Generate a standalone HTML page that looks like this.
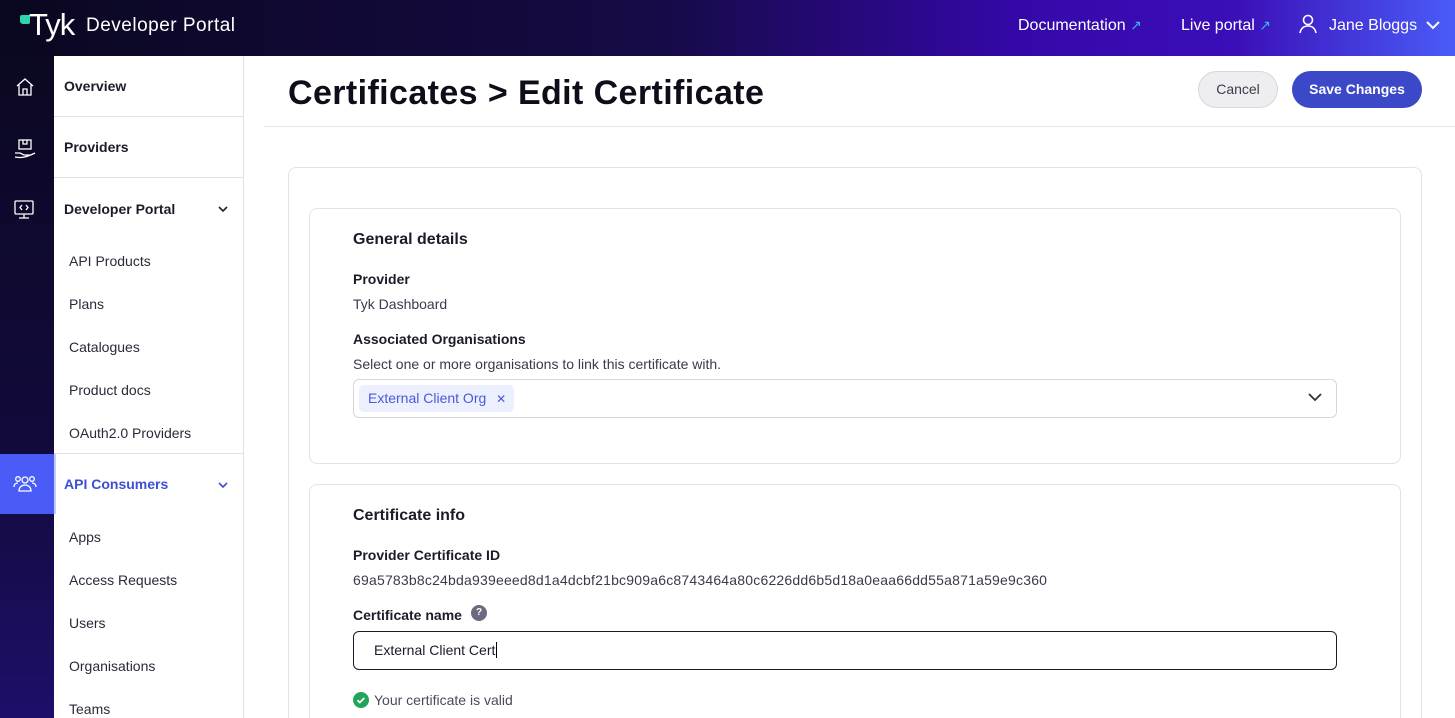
<!DOCTYPE html>
<html style="width:1455px;height:718px;overflow:hidden"><head><meta charset="utf-8"><style>
*{box-sizing:border-box;margin:0;padding:0}
body{width:1455px;height:718px;overflow:hidden;font-family:"Liberation Sans",sans-serif;background:#fff;position:relative;color:#1a1a2e}
.top{position:absolute;left:0;top:0;width:1455px;height:56px;background:linear-gradient(90deg,#0a0720 0%,#160a45 45%,#3408a8 70%,#3b0fb8 85%,#4a5cf8 100%);color:#fff}
.rail{position:absolute;left:0;top:56px;width:54px;height:662px;background:linear-gradient(180deg,#0b0822 0%,#120a3c 60%,#1d0f6a 100%)}
.side{position:absolute;left:54px;top:56px;width:190px;height:662px;background:#fff;border-right:1px solid #e0e0e6}
.side .h{height:61px;border-bottom:1px solid #e0e0e6;font-weight:bold;font-size:14px;padding-left:10px;display:flex;align-items:center;color:#1c1c28}
.side .s{position:absolute;left:15px;font-size:14px;color:#2a2a3a}
.card{position:absolute;border:1px solid #e2e2e8;border-radius:8px;background:#fff}
.open{border-bottom:none;border-radius:8px 8px 0 0}
.lbl{position:absolute;left:353px;font-weight:bold;font-size:14px;color:#1c1c28}
.txt{position:absolute;left:353px;font-size:14px;color:#3a3a4a}
</style></head><body>
<div class="top">
 <div style="position:absolute;left:20px;top:15px;width:10px;height:9px;background:#2dd4b0;border-radius:2px 0 2px 3px"></div>
 <div style="position:absolute;left:29px;top:7px;font-size:31px;letter-spacing:-1px">Tyk</div>
 <div style="position:absolute;left:86px;top:15px;font-size:19px;letter-spacing:0.5px">Developer Portal</div>
 <div style="position:absolute;left:1018px;top:17px;font-size:16px">Documentation <span style="color:#38b6f0;font-size:14px">↗</span></div>
 <div style="position:absolute;left:1181px;top:17px;font-size:16px">Live portal <span style="color:#38b6f0;font-size:14px">↗</span></div>
 <svg style="position:absolute;left:1298px;top:14px" width="20" height="20" viewBox="0 0 20 20" fill="none" stroke="#fff" stroke-width="1.6"><circle cx="10" cy="6" r="4.5"/><path d="M2 19c1-5 4-7 8-7s7 2 8 7"/></svg>
 <div style="position:absolute;left:1329px;top:17px;font-size:16px">Jane Bloggs</div>
 <svg style="position:absolute;left:1425px;top:20px" width="16" height="10" viewBox="0 0 16 10" fill="none" stroke="#fff" stroke-width="2"><path d="M2 2l6 6 6-6"/></svg>
</div>
<div class="rail">
 <svg style="position:absolute;left:15px;top:21px" width="20" height="20" viewBox="0 0 20 20" fill="none" stroke="#fff" stroke-width="1.3"><path d="M2 9L10 2l8 7M4 8v10h12V8M8 18v-6h4v6"/></svg>
 <svg style="position:absolute;left:14px;top:82px" width="22" height="22" viewBox="0 0 22 22" fill="none" stroke="#fff" stroke-width="1.3"><rect x="5" y="2" width="12" height="9"/><path d="M9 2v4h4V2M1 15h5l4 2h6M1 19c5 1 10 1 20-4"/></svg>
 <svg style="position:absolute;left:13px;top:143px" width="22" height="22" viewBox="0 0 22 22" fill="none" stroke="#fff" stroke-width="1.3"><rect x="2" y="2" width="18" height="13" rx="1"/><path d="M9 6l-2 2.5 2 2.5M13 6l2 2.5-2 2.5M11 15v4M6 19h10"/></svg>
 <div style="position:absolute;left:0;top:398px;width:54px;height:60px;background:#4a5cf5"></div>
 <svg style="position:absolute;left:13px;top:418px" width="24" height="20" viewBox="0 0 24 20" fill="none" stroke="#fff" stroke-width="1.3"><circle cx="12" cy="6" r="3"/><circle cx="5" cy="5" r="2.3"/><circle cx="19" cy="5" r="2.3"/><path d="M6 17c0-4 3-6 6-6s6 2 6 6zM1 13c0-3 2-4 4-4M23 13c0-3-2-4-4-4"/></svg>
</div>
<div class="side">
 <div class="h">Overview</div>
 <div class="h">Providers</div>
 <div class="h" style="border:none;position:relative">Developer Portal<svg style="position:absolute;left:164px;top:28px" width="10" height="6" viewBox="0 0 10 6" fill="none" stroke="#222" stroke-width="1.6"><path d="M1 1l4 4 4-4"/></svg></div>
 <div class="s" style="top:197px">API Products</div>
 <div class="s" style="top:240px">Plans</div>
 <div class="s" style="top:283px">Catalogues</div>
 <div class="s" style="top:326px">Product docs</div>
 <div class="s" style="top:369px">OAuth2.0 Providers</div>
 <div style="position:absolute;left:0;top:397px;width:189px;border-top:1px solid #e0e0e6"></div>
 <div style="position:absolute;left:0;top:398px;width:2px;height:60px;background:#c5cbfa"></div>
 <div style="position:absolute;left:10px;top:420px;font-size:14px;font-weight:bold;color:#3d4fd6">API Consumers</div>
 <svg style="position:absolute;left:164px;top:426px" width="10" height="6" viewBox="0 0 10 6" fill="none" stroke="#3d4fd6" stroke-width="1.6"><path d="M1 1l4 4 4-4"/></svg>
 <div class="s" style="top:473px">Apps</div>
 <div class="s" style="top:516px">Access Requests</div>
 <div class="s" style="top:559px">Users</div>
 <div class="s" style="top:602px">Organisations</div>
 <div class="s" style="top:645px">Teams</div>
</div>
<div style="position:absolute;left:288px;top:74px;font-size:34px;font-weight:bold;color:#0e0e1a;letter-spacing:0.4px">Certificates &gt; Edit Certificate</div>
<div style="position:absolute;left:1198px;top:71px;width:80px;height:37px;border:1px solid #d6d6dc;border-radius:19px;background:#eeeef1;font-size:14px;color:#3a3a4a;text-align:center;line-height:35px">Cancel</div>
<div style="position:absolute;left:1292px;top:71px;width:130px;height:37px;border-radius:19px;background:#3b48c8;font-size:14px;font-weight:bold;color:#fff;text-align:center;line-height:37px">Save Changes</div>
<div style="position:absolute;left:264px;top:126px;right:0;border-top:1px solid #e4e4ea"></div>
<div class="card open" style="left:288px;top:167px;width:1134px;height:551px"></div>
<div class="card" style="left:309px;top:208px;width:1092px;height:256px"></div>
<div class="card open" style="left:309px;top:484px;width:1092px;height:234px"></div>
<div class="lbl" style="top:231px;font-size:16px">General details</div>
<div class="lbl" style="top:271px">Provider</div>
<div class="txt" style="top:296px">Tyk Dashboard</div>
<div class="lbl" style="top:331px">Associated Organisations</div>
<div class="txt" style="top:356px">Select one or more organisations to link this certificate with.</div>
<div style="position:absolute;left:353px;top:379px;width:984px;height:39px;border:1px solid #d6d6dc;border-radius:6px"></div>
<div style="position:absolute;left:359px;top:385px;width:155px;height:27px;background:#eceffd;border-radius:5px;color:#4a5ad8;font-size:14px;line-height:27px;padding-left:9px">External Client Org <span style="margin-left:6px;font-size:12px">✕</span></div>
<svg style="position:absolute;left:1308px;top:393px" width="14" height="9" viewBox="0 0 14 9" fill="none" stroke="#333" stroke-width="1.8"><path d="M1 1l6 6 6-6"/></svg>
<div class="lbl" style="top:507px;font-size:16px">Certificate info</div>
<div class="lbl" style="top:547px">Provider Certificate ID</div>
<div class="txt" style="top:572px;letter-spacing:0.2px">69a5783b8c24bda939eeed8d1a4dcbf21bc909a6c8743464a80c6226dd6b5d18a0eaa66dd55a871a59e9c360</div>
<div class="lbl" style="top:607px">Certificate name</div>
<div style="position:absolute;left:471px;top:605px;width:16px;height:16px;border-radius:50%;background:#6b6b80;color:#fff;font-size:10px;text-align:center;line-height:16px;font-weight:bold">?</div>
<div style="position:absolute;left:353px;top:631px;width:984px;height:39px;border:1px solid #1a1a2a;border-radius:6px;font-size:14px;line-height:37px;padding-left:20px;color:#1a1a2a">External Client Cert<span style="border-left:1px solid #000;margin-left:1px"></span></div>
<div style="position:absolute;left:353px;top:692px;width:16px;height:16px;border-radius:50%;background:#22a55b"></div>
<svg style="position:absolute;left:353px;top:692px" width="16" height="16" viewBox="0 0 16 16" fill="none" stroke="#fff" stroke-width="1.8"><path d="M4.5 8.2l2.3 2.3 4.5-4.5"/></svg>
<div class="txt" style="left:374px;top:692px;color:#4a4a5a">Your certificate is valid</div>
</body></html>
